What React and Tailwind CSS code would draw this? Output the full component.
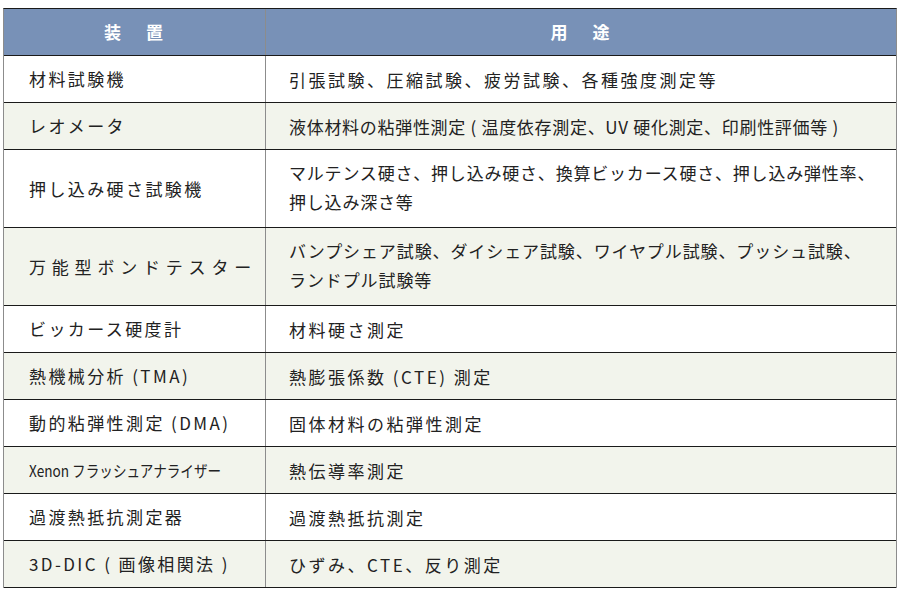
import React from "react";

const rows = [
  { name: "材料試験機", use: ["引張試験、圧縮試験、疲労試験、各種強度測定等"] },
  { name: "レオメータ", use: ["液体材料の粘弾性測定 ( 温度依存測定、UV 硬化測定、印刷性評価等 )"], useCls: "tracking-[0.7px]" },
  { name: "押し込み硬さ試験機", use: ["マルテンス硬さ、押し込み硬さ、換算ビッカース硬さ、押し込み弾性率、", "押し込み深さ等"], useCls: "tracking-[0.8px]" },
  { name: "万能型ボンドテスター", use: ["バンプシェア試験、ダイシェア試験、ワイヤプル試験、プッシュ試験、", "ランドプル試験等"], useCls: "tracking-[0.9px]" },
  { name: "ビッカース硬度計", use: ["材料硬さ測定"] },
  { name: "熱機械分析 (TMA)", use: ["熱膨張係数 (CTE) 測定"] },
  { name: "動的粘弾性測定 (DMA)", use: ["固体材料の粘弾性測定"] },
  { name: "Xenon フラッシュアナライザー", use: ["熱伝導率測定"], narrow: true },
  { name: "過渡熱抵抗測定器", use: ["過渡熱抵抗測定"] },
  { name: "3D-DIC ( 画像相関法 )", use: ["ひずみ、CTE、反り測定"] },
];

export default function App() {
  return (
    <div className="w-[900px] h-[590px] bg-white pt-[8px] pl-[3px] font-['Noto_Sans_CJK_JP','Noto_Sans',sans-serif] text-[#222]">
      <div className="w-[894px] border-x border-x-[#8c8c8c] border-t border-t-[#1a1a1a]">
        <div className="flex h-[47px] bg-[#7891b7] border-b border-b-[#1a1a1a] text-white font-bold text-[17px]">
          <div className="w-[262px] shrink-0 border-r border-r-[#8c8c8c] flex items-center justify-center tracking-[4px] pl-[2px]">
            装　置
          </div>
          <div className="flex-1 flex items-center justify-center tracking-[4px] pl-[2px]">用　途</div>
        </div>
        {rows.map((r, i) => {
          const tall = r.use.length > 1;
          return (
            <div
              key={i}
              className={`flex border-b border-b-[#1a1a1a] ${tall ? "h-[78px]" : "h-[47px]"} ${i % 2 === 1 ? "bg-[#f2f4ec]" : "bg-white"}`}
            >
              <div className="w-[262px] shrink-0 border-r border-r-[#8c8c8c] flex items-center pl-[25px] text-[17px] tracking-[2.4px] whitespace-nowrap">
                {r.narrow ? (
                  <span className="inline-block origin-left scale-x-[0.85] text-[16px] tracking-normal">{r.name}</span>
                ) : (
                  <span className={r.name === "万能型ボンドテスター" ? "tracking-[5.8px]" : ""}>{r.name}</span>
                )}
              </div>
              <div className={`flex-1 flex flex-col justify-center pl-[23px] pb-[4px] text-[17px] leading-[29px] whitespace-nowrap ${r.useCls || "tracking-[2.5px]"}`}>
                {r.use.map((u, j) => (
                  <div key={j} className={tall ? "" : "-mb-[4px]"}>{u}</div>
                ))}
              </div>
            </div>
          );
        })}
      </div>
    </div>
  );
}
